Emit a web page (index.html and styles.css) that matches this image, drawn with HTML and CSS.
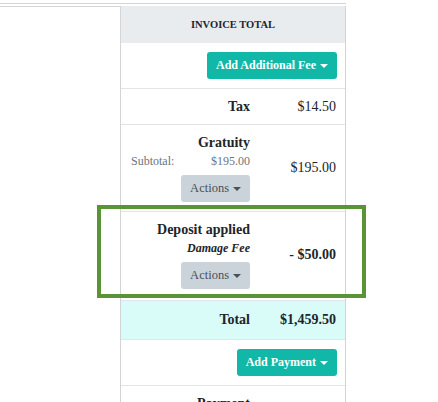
FILE: index.html
```html
<!DOCTYPE html>
<html>
<head>
<meta charset="utf-8">
<link rel="stylesheet" href="styles.css">
</head>
<body>
<div class="page">
  <div class="topline"></div>
  <div class="table">
    <div class="side"></div>
    <div class="col">
      <div class="head">INVOICE TOTAL</div>
      <div class="row btnrow"><button class="btn teal">Add Additional Fee <span class="caret"></span></button></div>
      <div class="row line tax">
        <div class="label"><b>Tax</b></div>
        <div class="value">$14.50</div>
      </div>
      <div class="row line grat">
        <div class="label">
          <b>Gratuity</b>
          <div class="sub"><span>Subtotal:</span><span>$195.00</span></div>
          <button class="btn gray">Actions <span class="caret"></span></button>
        </div>
        <div class="value">$195.00</div>
      </div>
      <div class="row line dep">
        <div class="label">
          <b>Deposit applied</b>
          <i class="note">Damage Fee</i>
          <button class="btn gray">Actions <span class="caret"></span></button>
        </div>
        <div class="value"><b>- $50.00</b></div>
      </div>
      <div class="row line total">
        <div class="label"><b>Total</b></div>
        <div class="value"><b>$1,459.50</b></div>
      </div>
      <div class="row btnrow line"><button class="btn teal">Add Payment <span class="caret"></span></button></div>
      <div class="row line pay">
        <div class="label"><b>Payment</b></div>
        <div class="value"></div>
      </div>
    </div>
  </div>
  <div class="highlight"></div>
</div>
</body>
</html>
```
FILE: styles.css
```css
* { box-sizing: border-box; }
html, body { margin: 0; padding: 0; background: #fff; }
body {
  font-family: "Liberation Serif", "Times New Roman", serif;
  color: #212529;
  font-size: 14px;
  overflow: hidden;
  height: 402px;
}
.page { position: relative; width: 438px; height: 402px; padding-top: 3px; }
.topline { width: 346px; height: 1px; background: #d4d4d4; }
.table { display: flex; width: 346px; margin-top: 2px; }
.side { width: 120px; border-top: 1px solid #d4d4d4; }
.col {
  width: 226px;
  border-left: 1px solid #d4d4d4;
  border-right: 1px solid #d4d4d4;
}
.head {
  background: #e9ecef;
  height: 37px;
  display: flex;
  align-items: center;
  justify-content: center;
  font-weight: bold;
  font-size: 10.5px;
}
.row { display: flex; }
.line { border-top: 1px solid #e2e5e8; }
.btnrow { justify-content: flex-end; padding: 9px 8px 9px 0; }
.label {
  width: 140px;
  padding: 0 11px 0 10px;
  display: flex;
  flex-direction: column;
  align-items: flex-end;
  line-height: 18px;
}
.value {
  flex: 1;
  padding-right: 9px;
  display: flex;
  align-items: center;
  justify-content: flex-end;
}
.tax { height: 36px; align-items: center; }
.grat { padding: 9px 0; }
.dep { padding: 9px 0 11px; }
.total { height: 39px; background: #d9fcf8; align-items: center; }
.pay { padding-top: 9px; }
.sub {
  width: 100%;
  display: flex;
  justify-content: space-between;
  font-size: 12px;
  color: #6c757d;
}
.note { font-size: 12px; font-weight: bold; }
.btn {
  font-family: inherit;
  border: none;
  border-radius: 3px;
  height: 27px;
  font-size: 12px;
  display: flex;
  align-items: center;
  gap: 4px;
  cursor: pointer;
}
.teal { background: #12b8a7; color: #fff; font-weight: bold; padding: 0 9px 0 9px; }
.gray { background: #c9d3d9; color: #495057; padding: 0 9px; margin-top: 5px; height: 27px; font-size: 12.5px; }
.caret {
  display: inline-block;
  width: 0; height: 0;
  border-top: 4px solid currentColor;
  border-left: 4px solid transparent;
  border-right: 4px solid transparent;
}
.highlight {
  position: absolute;
  left: 97px; top: 205px;
  width: 269px; height: 93px;
  border: 4px solid #5a9437;
}
```
